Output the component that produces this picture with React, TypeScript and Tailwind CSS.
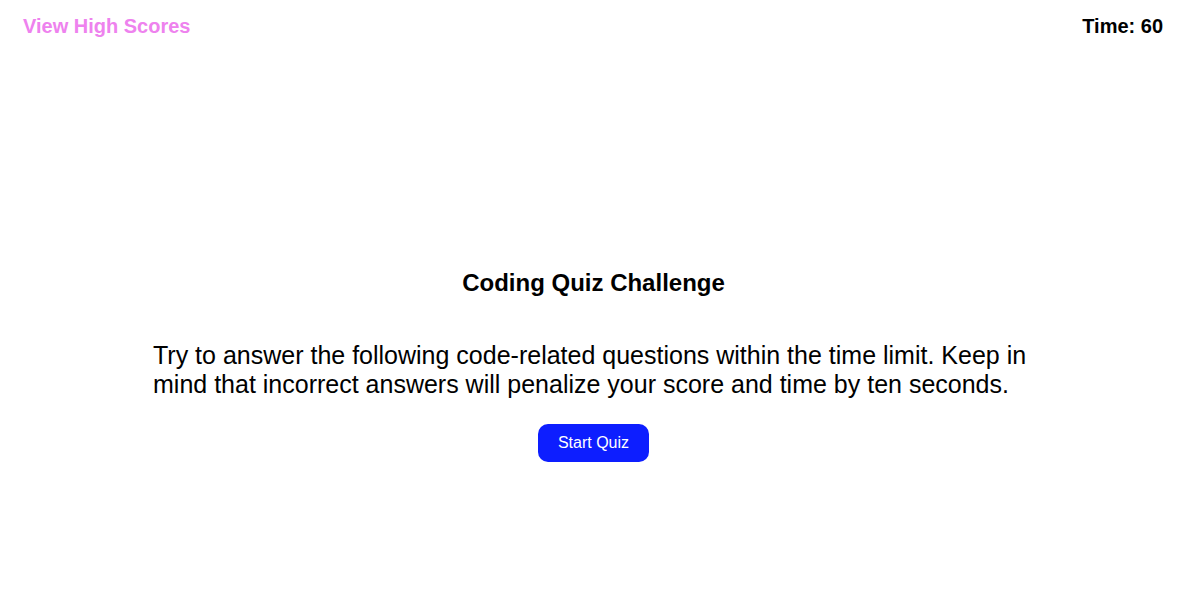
export default function App() {
  return (
    <div className="flex min-h-[612px] flex-col bg-white font-['Liberation_Sans',Arial,sans-serif] text-black">
      <header className="flex items-center justify-between pl-[23px] pr-[15px] pt-[11px]">
        <a href="#" className="text-[20px] font-bold text-[#ee82ee]">
          View High Scores
        </a>
        <p className="text-[20px] font-bold">Time: 60</p>
      </header>

      <main className="ml-[153px] mt-[224px] flex w-[881px] flex-col items-center">
        <h1 className="text-[24px] font-bold">Coding Quiz Challenge</h1>
        <p className="mt-[40px] w-full text-[25px] leading-[29px]">
          Try to answer the following code-related questions within the time limit. Keep in mind that incorrect
          answers will penalize your score and time by ten seconds.
        </p>
        <button className="mt-[25px] h-[38px] w-[111px] rounded-[10px] bg-[#0d1eff] text-[16px] text-white">
          Start Quiz
        </button>
      </main>
    </div>
  );
}
